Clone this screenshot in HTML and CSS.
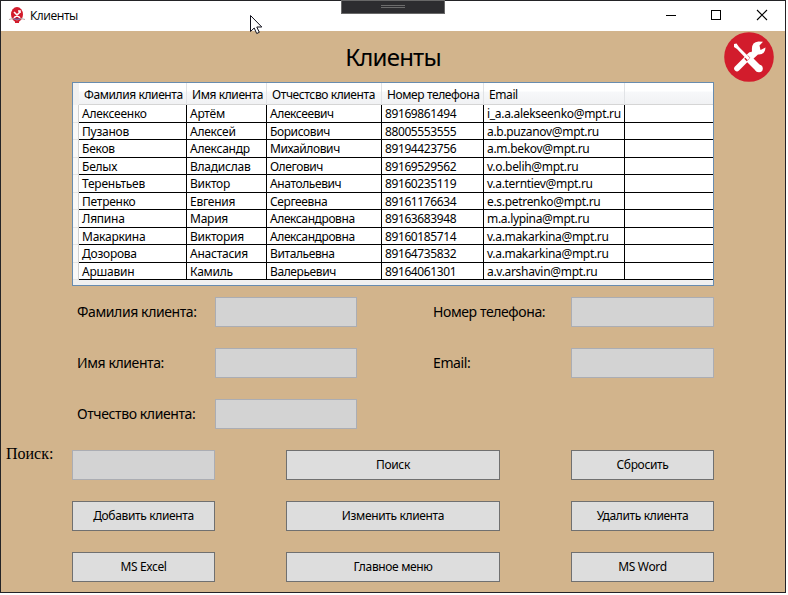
FILE: index.html
```html
<!DOCTYPE html>
<html lang="ru">
<head>
<meta charset="utf-8">
<title>Клиенты</title>
<link rel="stylesheet" href="styles.css">
</head>
<body>
<div class="window">
  <header class="titlebar">
    <svg class="app-icon" width="16" height="16" viewBox="0 0 16 16">
      <ellipse cx="8" cy="7.5" rx="6" ry="7.5" fill="#d21c2c"/>
      <path d="M5 5l6 6M11 5l-6 6M9 4h2v2" stroke="#fff" stroke-width="1.6" fill="none"/>
      <path d="M0 12.5l4-1 4 1.500 4-1.500 4 1" stroke="#b9a5a5" fill="none"/>
      <path d="M5 12h6" stroke="#5646a0"/>
      <path d="M6 15h4" stroke="#d21c2c" stroke-width="2"/>
    </svg>
    <span class="caption">Клиенты</span>
    <div class="controls">
      <svg width="46" height="30" viewBox="0 0 46 30"><path d="M19 14.500h10" stroke="#000"/></svg>
      <svg width="46" height="30" viewBox="0 0 46 30"><rect x="18.500" y="9.500" width="9" height="9" fill="none" stroke="#000"/></svg>
      <svg width="46" height="30" viewBox="0 0 46 30"><path d="M18 9l10 10M28 9l-10 10" stroke="#000" stroke-width="1.100"/></svg>
    </div>
    <div class="debug-tab"><i></i></div>
    <svg class="cursor" width="13" height="20" viewBox="0 0 13 20"><path d="M.5.5v16l3.700-3.500 2.500 5.500 2.600-1.200-2.500-5.300h5z" fill="#fff" stroke="#10101c"/></svg>
  </header>
  <main class="content">
    <h1><span>Клиенты</span></h1>
    <svg class="logo" width="50" height="50" viewBox="0 0 50 50">
      <circle cx="25" cy="25" r="24.800" fill="#d21c2c"/>
      <path d="M13 36.500L26.500 23" stroke="#fff" stroke-width="5.600" stroke-linecap="round"/>
      <path d="M25 24L28 19Q27 10 34.500 9.500L39 9.800L35.500 13.500L36.500 18L41.500 15.500Q41 23 34 22.500L29 27Z" fill="#fff"/>
      <path d="M22 25L26 29" stroke="#d21c2c" stroke-width="5"/>
      <path d="M10 12L12.500 11.500L15 15L26 26L23.500 28L13 17L10 15Z" fill="#fff"/>
      <path d="M25 27L35 37" stroke="#fff" stroke-width="7"/>
      <circle cx="35" cy="36.500" r="3.800" fill="#fff"/>
    </svg>
    <div class="grid-box">
      <table>
        <colgroup><col class="c0"><col class="c1"><col class="c2"><col class="c3"><col class="c4"><col class="c5"><col class="c6"></colgroup>
        <thead><tr><th></th><th>Фамилия клиента</th><th>Имя клиента</th><th>Отчестсво клиента</th><th>Номер телефона</th><th>Email</th><th></th></tr></thead>
        <tbody>
          <tr><td></td><td>Алексеенко</td><td>Артём</td><td>Алексеевич</td><td>89169861494</td><td>i_a.a.alekseenko@mpt.ru</td><td></td></tr>
          <tr><td></td><td>Пузанов</td><td>Алексей</td><td>Борисович</td><td>88005553555</td><td>a.b.puzanov@mpt.ru</td><td></td></tr>
          <tr><td></td><td>Беков</td><td>Александр</td><td>Михайлович</td><td>89194423756</td><td>a.m.bekov@mpt.ru</td><td></td></tr>
          <tr><td></td><td>Белых</td><td>Владислав</td><td>Олегович</td><td>89169529562</td><td>v.o.belih@mpt.ru</td><td></td></tr>
          <tr><td></td><td>Тереньтьев</td><td>Виктор</td><td>Анатольевич</td><td>89160235119</td><td>v.a.terntiev@mpt.ru</td><td></td></tr>
          <tr><td></td><td>Петренко</td><td>Евгения</td><td>Сергеевна</td><td>89161176634</td><td>e.s.petrenko@mpt.ru</td><td></td></tr>
          <tr><td></td><td>Ляпина</td><td>Мария</td><td>Александровна</td><td>89163683948</td><td>m.a.lypina@mpt.ru</td><td></td></tr>
          <tr><td></td><td>Макаркина</td><td>Виктория</td><td>Александровна</td><td>89160185714</td><td>v.a.makarkina@mpt.ru</td><td></td></tr>
          <tr><td></td><td>Дозорова</td><td>Анастасия</td><td>Витальевна</td><td>89164735832</td><td>v.a.makarkina@mpt.ru</td><td></td></tr>
          <tr><td></td><td>Аршавин</td><td>Камиль</td><td>Валерьевич</td><td>89164061301</td><td>a.v.arshavin@mpt.ru</td><td></td></tr>
        </tbody>
      </table>
    </div>
    <form class="fields">
      <label>Фамилия клиента:</label><div class="input"></div>
      <label class="right">Номер телефона:</label><div class="input"></div>
      <label>Имя клиента:</label><div class="input"></div>
      <label class="right">Email:</label><div class="input"></div>
      <label>Отчество клиента:</label><div class="input"></div>
    </form>
    <div class="actions">
      <span class="search-label">Поиск:</span><div class="input"></div>
      <button class="mid">Поиск</button><button class="last">Сбросить</button>
      <button class="first">Добавить клиента</button><button class="mid">Изменить клиента</button><button class="last">Удалить клиента</button>
      <button class="first">MS Excel</button><button class="mid">Главное меню</button><button class="last">MS Word</button>
    </div>
  </main>
</div>
</body>
</html>
```
FILE: styles.css
```css
* { box-sizing: border-box; }
body { margin: 0; width: 788px; height: 595px; background: #fff; overflow: hidden; color: #000; font-family: "Noto Sans", sans-serif; font-size: 12px; }
.window { width: 786px; height: 593px; border: 1px solid #232326; background: #d2b48c; }
.titlebar { position: relative; display: flex; align-items: center; height: 30px; background: #fff; padding-left: 8px; }
.app-icon { margin-top: -2px; }
.caption { margin: -1px 0 0 5px; font-family: "Open Sans", sans-serif; font-size: 12px; letter-spacing: -.45px; }
.controls { display: flex; margin-left: auto; }
.controls svg { display: block; }
.debug-tab { position: absolute; left: 340px; top: -1px; width: 104px; height: 14px; background: #2d2d30; border: 1px solid #686868; display: flex; justify-content: center; padding-top: 4px; }
.debug-tab i { width: 24px; height: 3px; border: solid #6c6c6c; border-width: 1px 0; }
.cursor { position: absolute; left: 249px; top: 14px; z-index: 2; }
.content { position: relative; height: 561px; padding-left: 71px; }
h1 { margin: 0; width: 642px; height: 51px; line-height: 52px; text-align: center; font-size: 24px; font-weight: 400; letter-spacing: -.8px; }
.logo { position: absolute; left: 723px; top: 1px; }
.grid-box { width: 642px; height: 204px; border: 1px solid #688caf; background: #f0f0f0; }
table { table-layout: fixed; width: 640px; border-collapse: separate; border-spacing: 0; }
.c0 { width: 6px; } .c1 { width: 108px; } .c2 { width: 80px; } .c3 { width: 115px; } .c4 { width: 102px; } .c5 { width: 141px; } .c6 { width: 88px; }
th, td { padding: 0; white-space: nowrap; text-align: left; font-weight: 400; }
th { height: 22px; line-height: 19px; padding: 2px 0 0 5px; letter-spacing: -.4px; background: linear-gradient(#fff 0 40%, #f7f8fa 41%, #f1f2f4); border-right: 1px solid #e1e3e6; border-bottom: 1px solid #d5d5d5; }
th:first-child { padding: 0; background: #f0f0f0; border: 0; }
td { height: 17px; line-height: 14px; padding: 2px 0 0 3px; background: #fff; border-right: 1px solid #000; border-bottom: 1px solid #000; letter-spacing: -.24px; }
td:nth-child(4), td:nth-child(5) { letter-spacing: -.4px; }
td:nth-child(6) { letter-spacing: -.31px; }
tbody tr:nth-child(odd) td { height: 18px; line-height: 17px; padding-top: 0; }
td:first-child { padding: 0; border-color: #e4e4e4 #d0d0d0 #e4e4e4; background: #f8f8f8; }
th:last-child, td:last-child { border-right: 0; }
.fields { display: grid; grid-template-columns: 143px 142px 214px 143px; grid-auto-rows: 30px; row-gap: 21px; margin-top: 11px; }
label { padding-left: 5px; line-height: 30px; font-size: 14px; letter-spacing: -.4px; white-space: nowrap; }
label.right { padding-left: 76px; }
.input { height: 30px; background: #d3d3d3; border: 1px solid #abadb3; }
.actions { display: grid; grid-template-columns: 71px 143px 71px 214px 71px 143px; grid-auto-rows: 30px; row-gap: 21px; margin: 21px 0 0 -71px; }
.search-label { padding-left: 5px; margin-top: -6px; font: 16px/20px "Liberation Serif", serif; }
.first { grid-column: 2; } .mid { grid-column: 4; } .last { grid-column: 6; }
button { margin: 0; padding: 0; height: 30px; border: 1px solid #707070; border-radius: 0; background: #ddd; color: #000; font: 12px/28px "Noto Sans", sans-serif; letter-spacing: -.35px; }
```
